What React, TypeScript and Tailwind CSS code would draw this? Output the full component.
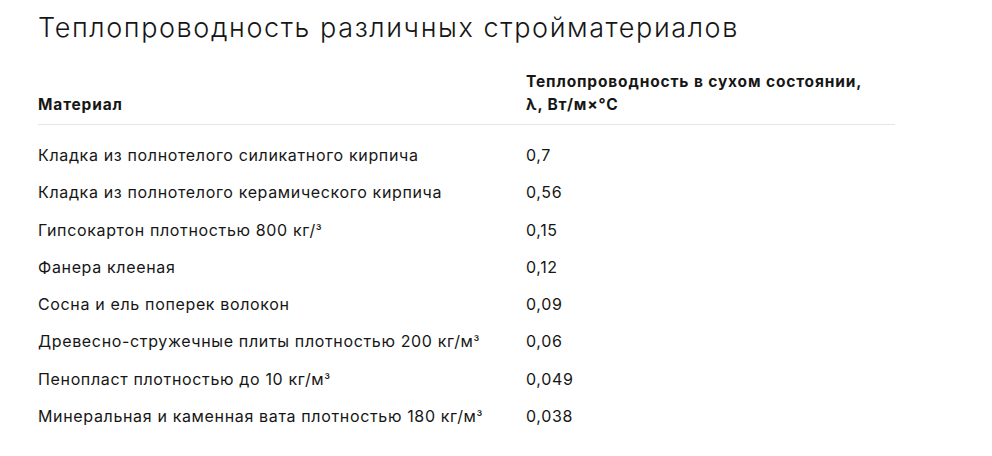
const rows: [string, string][] = [
  ['Кладка из полнотелого силикатного кирпича', '0,7'],
  ['Кладка из полнотелого керамического кирпича', '0,56'],
  ['Гипсокартон плотностью 800 кг/³', '0,15'],
  ['Фанера клееная', '0,12'],
  ['Сосна и ель поперек волокон', '0,09'],
  ['Древесно-стружечные плиты плотностью 200 кг/м³', '0,06'],
  ['Пенопласт плотностью до 10 кг/м³', '0,049'],
  ['Минеральная и каменная вата плотностью 180 кг/м³', '0,038'],
];

// маленькая тройка как в оригинале
function withSup(text: string) {
  const parts = text.split('³');
  if (parts.length === 1) return text;
  return (
    <>
      {parts[0]}
      <span className="text-[13px] leading-none tracking-normal">³</span>
      {parts[1]}
    </>
  );
}

export default function App() {
  return (
    <div
      className="w-[992px] h-[456px] bg-white text-[#161616] px-[38px] pt-[10px]"
      style={{ fontFamily: 'Inter, "Noto Sans", sans-serif' }}
    >
      <h1 className="text-[27px] font-light leading-[36px] tracking-[1.6px]">
        Теплопроводность различных стройматериалов
      </h1>
      <table className="mt-[24px] w-[857px] border-collapse text-[15.5px] tracking-[0.85px]">
        <thead>
          <tr className="border-b border-[#e5e5e5]">
            <th className="w-[488px] pb-[8px] text-left align-bottom font-bold leading-[23px]">
              Материал
            </th>
            <th className="pb-[8px] text-left align-bottom font-bold leading-[23px]">
              Теплопроводность в сухом состоянии,
              <br />
              λ, Вт/м×°С
            </th>
          </tr>
        </thead>
        <tbody className="text-[16px] tracking-[0.65px]">
          {rows.map(([name, value], i) => (
            <tr key={i}>
              <td className={`h-[22px] leading-[22px] ${i === 0 ? 'pt-[19px]' : 'pt-[15.3px]'}`}>{withSup(name)}</td>
              <td className={`h-[22px] leading-[22px] ${i === 0 ? 'pt-[19px]' : 'pt-[15.3px]'}`}>{value}</td>
            </tr>
          ))}
        </tbody>
      </table>
    </div>
  );
}
